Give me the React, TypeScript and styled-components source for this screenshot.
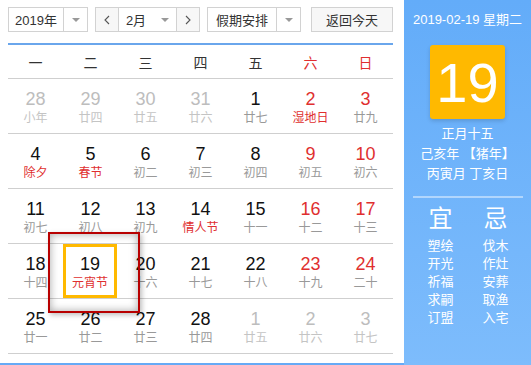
import React from 'react';
import styled, { createGlobalStyle, css } from 'styled-components';

const GlobalStyle = createGlobalStyle`
  html, body {
    margin: 0;
    padding: 0;
    background: #fff;
  }
  body {
    font-family: 'Liberation Sans', 'Noto Sans CJK SC', sans-serif;
    color: #333;
  }
`;

type Tone = 'normal' | 'weekend' | 'other';

type DayCell = {
  day: number;
  lunar: string;
  tone: Tone;
  festival?: boolean;
  today?: boolean;
};

const weekdays = ['一', '二', '三', '四', '五', '六', '日'];

const rows: DayCell[][] = [
  [
    { day: 28, lunar: '小年', tone: 'other' },
    { day: 29, lunar: '廿四', tone: 'other' },
    { day: 30, lunar: '廿五', tone: 'other' },
    { day: 31, lunar: '廿六', tone: 'other' },
    { day: 1, lunar: '廿七', tone: 'normal' },
    { day: 2, lunar: '湿地日', tone: 'weekend', festival: true },
    { day: 3, lunar: '廿九', tone: 'weekend' },
  ],
  [
    { day: 4, lunar: '除夕', tone: 'normal', festival: true },
    { day: 5, lunar: '春节', tone: 'normal', festival: true },
    { day: 6, lunar: '初二', tone: 'normal' },
    { day: 7, lunar: '初三', tone: 'normal' },
    { day: 8, lunar: '初四', tone: 'normal' },
    { day: 9, lunar: '初五', tone: 'weekend' },
    { day: 10, lunar: '初六', tone: 'weekend' },
  ],
  [
    { day: 11, lunar: '初七', tone: 'normal' },
    { day: 12, lunar: '初八', tone: 'normal' },
    { day: 13, lunar: '初九', tone: 'normal' },
    { day: 14, lunar: '情人节', tone: 'normal', festival: true },
    { day: 15, lunar: '十一', tone: 'normal' },
    { day: 16, lunar: '十二', tone: 'weekend' },
    { day: 17, lunar: '十三', tone: 'weekend' },
  ],
  [
    { day: 18, lunar: '十四', tone: 'normal' },
    { day: 19, lunar: '元宵节', tone: 'normal', festival: true, today: true },
    { day: 20, lunar: '十六', tone: 'normal' },
    { day: 21, lunar: '十七', tone: 'normal' },
    { day: 22, lunar: '十八', tone: 'normal' },
    { day: 23, lunar: '十九', tone: 'weekend' },
    { day: 24, lunar: '二十', tone: 'weekend' },
  ],
  [
    { day: 25, lunar: '廿一', tone: 'normal' },
    { day: 26, lunar: '廿二', tone: 'normal' },
    { day: 27, lunar: '廿三', tone: 'normal' },
    { day: 28, lunar: '廿四', tone: 'normal' },
    { day: 1, lunar: '廿五', tone: 'other' },
    { day: 2, lunar: '廿六', tone: 'other' },
    { day: 3, lunar: '廿七', tone: 'other' },
  ],
];

const yi = ['塑绘', '开光', '祈福', '求嗣', '订盟'];
const ji = ['伐木', '作灶', '安葬', '取渔', '入宅'];

const Wrapper = styled.div`
  display: flex;
  width: 531px;
  height: 365px;
  overflow: hidden;
`;

const CalendarArea = styled.div`
  position: relative;
  width: 404px;
  height: 365px;
  box-sizing: border-box;
  padding: 7px 11px 0 8px;
  border-bottom: 2px solid #66aaf6;
`;

const Toolbar = styled.div`
  display: flex;
  height: 25px;
  margin-bottom: 11px;
`;

const SelectBox = styled.div<{ $width: number; $gap: number }>`
  display: flex;
  width: ${(p) => p.$width}px;
  margin-right: ${(p) => p.$gap}px;
  box-sizing: border-box;
  border: 1px solid #d2d2d2;
  background: #fff;
  font-size: 13px;
  color: #333;
`;

const SelectLabel = styled.div`
  flex: 1;
  display: flex;
  align-items: center;
  justify-content: center;
`;

const ArrowPart = styled.div<{ $divider?: boolean }>`
  width: 23px;
  display: flex;
  align-items: center;
  justify-content: center;
  border-left: ${(p) => (p.$divider === false ? 'none' : '1px solid #d2d2d2')};

  &::after {
    content: '';
    border-left: 4px solid transparent;
    border-right: 4px solid transparent;
    border-top: 4px solid #999;
  }
`;

const NavButton = styled.div<{ $side: 'left' | 'right' }>`
  width: 22px;
  display: flex;
  align-items: center;
  justify-content: center;
  background: #f7f7f7;
  color: #555;
  ${(p) =>
    p.$side === 'left'
      ? css`border-right: 1px solid #d2d2d2;`
      : css`border-left: 1px solid #d2d2d2;`}
`;

const MonthSelect = styled.div`
  flex: 1;
  display: flex;
  background: #fff;
`;

const TodayButton = styled.div`
  width: 82px;
  box-sizing: border-box;
  border: 1px solid #d2d2d2;
  background: #f7f7f7;
  display: flex;
  align-items: center;
  justify-content: center;
  font-size: 13px;
  color: #333;
`;

const HeaderRow = styled.div`
  display: grid;
  grid-template-columns: repeat(7, 1fr);
  height: 33px;
  border-top: 2px solid #6aa6ec;
  border-bottom: 1px solid #cfcfcf;
`;

const WeekdayCell = styled.div<{ $weekend: boolean }>`
  display: flex;
  align-items: center;
  justify-content: center;
  font-size: 14px;
  color: ${(p) => (p.$weekend ? '#e02f2f' : '#333')};
`;

const WeekRow = styled.div`
  display: grid;
  grid-template-columns: repeat(7, 1fr);
  height: 55px;
  box-sizing: border-box;
  border-bottom: 1px solid #cfcfcf;

  &:last-child {
    border-bottom: none;
  }
`;

const toneColor = (tone: Tone) => {
  if (tone === 'other') return '#bdbdbd';
  if (tone === 'weekend') return '#e02f2f';
  return '#111';
};

const Cell = styled.div<{ $today?: boolean }>`
  display: flex;
  flex-direction: column;
  align-items: center;
  padding-top: 9px;
  box-sizing: border-box;
  ${(p) =>
    p.$today &&
    css`
      box-shadow: inset 0 0 0 3px #ffb900;
      margin-right: 1px;
    `}
`;

const DayNumber = styled.div<{ $tone: Tone }>`
  font-size: 18px;
  line-height: 22px;
  color: ${(p) => toneColor(p.$tone)};
`;

const LunarText = styled.div<{ $tone: Tone; $festival?: boolean }>`
  font-size: 12px;
  line-height: 17px;
  color: ${(p) => (p.$tone === 'other' ? '#c4c4c4' : p.$festival ? '#e02f2f' : '#999')};
`;

const Highlight = styled.div`
  position: absolute;
  left: 48px;
  top: 232px;
  width: 92px;
  height: 81px;
  box-sizing: border-box;
  border: 2px solid #b80000;
  box-shadow: inset 0 0 8px rgba(0, 0, 0, 0.35), 2px 2px 5px rgba(0, 0, 0, 0.25);
  pointer-events: none;
`;

const SidePanel = styled.div`
  width: 127px;
  height: 365px;
  background: linear-gradient(to bottom, #63acf9, #7dbcfc);
  display: flex;
  flex-direction: column;
  align-items: center;
  color: #fff;
`;

const DateLine = styled.div`
  margin-top: 12px;
  font-size: 13px;
  line-height: 16px;
`;

const BigDay = styled.div`
  margin-top: 17px;
  width: 75px;
  height: 74px;
  border-radius: 3px;
  background: #ffb900;
  box-shadow: 0 2px 4px rgba(0, 0, 0, 0.15);
  display: flex;
  align-items: center;
  justify-content: center;
  font-size: 56px;
  font-weight: 300;
  font-family: 'Liberation Sans', sans-serif;
`;

const LunarInfo = styled.div`
  margin-top: 5px;
  font-size: 13px;
  line-height: 20px;
  text-align: center;
`;

const Divider = styled.div`
  margin-top: 12px;
  width: 110px;
  height: 2px;
  background: rgba(255, 255, 255, 0.45);
`;

const AdviceGrid = styled.div`
  margin-top: 6px;
  display: grid;
  grid-template-columns: 55px 55px;
  justify-items: center;
  margin-left: 1px;
`;

const AdviceColumn = styled.div`
  display: flex;
  flex-direction: column;
  align-items: center;
`;

const AdviceTitle = styled.div`
  font-size: 24px;
  line-height: 30px;
  margin-bottom: 3px;
`;

const AdviceItem = styled.div`
  font-size: 13px;
  line-height: 18px;
`;

const Chevron = ({ dir }: { dir: 'left' | 'right' }) => (
  <svg width="6" height="10" viewBox="0 0 6 10">
    <path
      d={dir === 'left' ? 'M5 1 L1 5 L5 9' : 'M1 1 L5 5 L1 9'}
      fill="none"
      stroke="#555"
      strokeWidth="1.1"
    />
  </svg>
);

export default function App() {
  return (
    <>
      <GlobalStyle />
      <Wrapper>
        <CalendarArea>
          <Toolbar>
            <SelectBox $width={80} $gap={7}>
              <SelectLabel>2019年</SelectLabel>
              <ArrowPart />
            </SelectBox>
            <SelectBox $width={105} $gap={7}>
              <NavButton $side="left">
                <Chevron dir="left" />
              </NavButton>
              <MonthSelect>
                <SelectLabel>2月</SelectLabel>
                <ArrowPart $divider={false} />
              </MonthSelect>
              <NavButton $side="right">
                <Chevron dir="right" />
              </NavButton>
            </SelectBox>
            <SelectBox $width={94} $gap={10}>
              <SelectLabel>假期安排</SelectLabel>
              <ArrowPart />
            </SelectBox>
            <TodayButton>返回今天</TodayButton>
          </Toolbar>
          <HeaderRow>
            {weekdays.map((w, i) => (
              <WeekdayCell key={w} $weekend={i >= 5}>
                {w}
              </WeekdayCell>
            ))}
          </HeaderRow>
          {rows.map((row, r) => (
            <WeekRow key={r}>
              {row.map((c, i) => (
                <Cell key={i} $today={c.today}>
                  <DayNumber $tone={c.tone}>{c.day}</DayNumber>
                  <LunarText $tone={c.tone} $festival={c.festival}>
                    {c.lunar}
                  </LunarText>
                </Cell>
              ))}
            </WeekRow>
          ))}
          <Highlight />
        </CalendarArea>
        <SidePanel>
          <DateLine>2019-02-19 星期二</DateLine>
          <BigDay>19</BigDay>
          <LunarInfo>
            <div>正月十五</div>
            <div>己亥年 【猪年】</div>
            <div>丙寅月 丁亥日</div>
          </LunarInfo>
          <Divider />
          <AdviceGrid>
            <AdviceColumn>
              <AdviceTitle>宜</AdviceTitle>
              {yi.map((t) => (
                <AdviceItem key={t}>{t}</AdviceItem>
              ))}
            </AdviceColumn>
            <AdviceColumn>
              <AdviceTitle>忌</AdviceTitle>
              {ji.map((t) => (
                <AdviceItem key={t}>{t}</AdviceItem>
              ))}
            </AdviceColumn>
          </AdviceGrid>
        </SidePanel>
      </Wrapper>
    </>
  );
}
